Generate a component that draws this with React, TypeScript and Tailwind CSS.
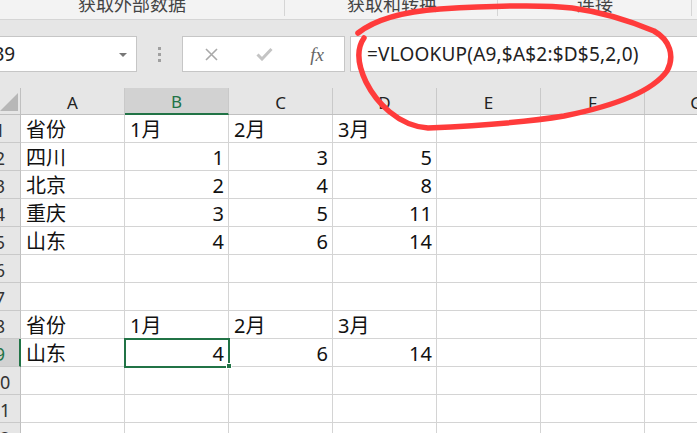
import React from "react"

const cols = ["A", "B", "C", "D", "E", "F", "G"]

type Cell = { t: string; right?: boolean }

const rows: Cell[][] = [
  [{ t: "省份" }, { t: "1月" }, { t: "2月" }, { t: "3月" }],
  [{ t: "四川" }, { t: "1", right: true }, { t: "3", right: true }, { t: "5", right: true }],
  [{ t: "北京" }, { t: "2", right: true }, { t: "4", right: true }, { t: "8", right: true }],
  [{ t: "重庆" }, { t: "3", right: true }, { t: "5", right: true }, { t: "11", right: true }],
  [{ t: "山东" }, { t: "4", right: true }, { t: "6", right: true }, { t: "14", right: true }],
  [],
  [],
  [{ t: "省份" }, { t: "1月" }, { t: "2月" }, { t: "3月" }],
  [{ t: "山东" }, { t: "4", right: true }, { t: "6", right: true }, { t: "14", right: true }],
  [],
  [],
  [],
]

const font = "font-['Noto_Sans','Noto_Sans_CJK_SC',sans-serif]"

const RibbonGroup: React.FC<{ label: string; w: string; pl: string }> = ({ label, w, pl }) => (
  <div className={`${w} ${pl} h-[16px] shrink-0 border-r border-[#d5d5d5] relative`}>
    <span className="absolute top-[-5px] text-[18px] leading-none text-[#444] whitespace-nowrap">{label}</span>
  </div>
)

const FormulaBar = () => (
  <div className="mt-[16px] flex h-[36px]">
    <div className="w-[138px] -ml-px shrink-0 bg-white border border-[#c6c6c6] flex items-center relative overflow-hidden">
      <span className="-ml-[8px] text-[19px] text-[#222] leading-none">B9</span>
      <span className="absolute left-[119px] top-[16px] w-0 h-0 border-l-[4px] border-r-[4px] border-t-[4px] border-l-transparent border-r-transparent border-t-[#777]" />
    </div>
    <div className="w-[45px] shrink-0 flex flex-col items-center justify-center gap-[3px]">
      <span className="w-[3px] h-[3px] bg-[#a0a0a0]" />
      <span className="w-[3px] h-[3px] bg-[#a0a0a0]" />
      <span className="w-[3px] h-[3px] bg-[#a0a0a0]" />
    </div>
    <div className="w-[163px] shrink-0 bg-white border border-[#c6c6c6] flex items-center">
      <div className="w-[56px] flex justify-center pl-[2px]">
        <svg width="15" height="15" viewBox="0 0 15 15">
          <path d="M2 2 L13 13 M13 2 L2 13" stroke="#a9a9a9" strokeWidth="1.6" fill="none" />
        </svg>
      </div>
      <div className="w-[52px] flex justify-center">
        <svg width="17" height="14" viewBox="0 0 17 14">
          <path d="M1.5 7.5 L6 12 L15.5 2" stroke="#c4c4c4" strokeWidth="3" fill="none" />
        </svg>
      </div>
      <div className="w-[54px] flex justify-center">
        <span className="font-['Liberation_Serif',serif] italic text-[19px] text-[#666] leading-none">fx</span>
      </div>
    </div>
    <div className="w-[5px] shrink-0" />
    <div className="flex-1 bg-white border border-r-0 border-[#c6c6c6] flex items-center pl-[16px]">
      <span className="text-[19px] tracking-[0.2px] text-[#222] leading-none whitespace-nowrap">=VLOOKUP(A9,$A$2:$D$5,2,0)</span>
    </div>
  </div>
)

const Grid = () => (
  <div className="mt-[16px] relative">
    <div className="flex h-[27px] border-b border-[#c0c0c0]">
      <div className="w-[21px] shrink-0 border-r border-[#c0c0c0] relative">
        <svg className="absolute left-0 top-[4px]" width="19" height="19" viewBox="0 0 19 19">
          <path d="M0 19 L18 19 L18 1 Z" fill="#b7b7b7" />
        </svg>
      </div>
      {cols.map((c) => {
        const sel = c === "B"
        return (
          <div
            key={c}
            className={`w-[104px] shrink-0 border-r border-[#c9c9c9] flex justify-center items-end pb-[3px] text-[17px] leading-none ${
              sel ? "bg-[#d2d2d2] text-[#217346] border-b-2 border-b-[#217346] -mb-px" : "text-[#222]"
            }`}
          >
            {c}
          </div>
        )
      })}
    </div>
    {rows.map((r, i) => {
      const n = i + 1
      const sel = n === 9
      return (
        <div key={n} className="flex h-[28px]">
          <div
            className={`w-[21px] shrink-0 overflow-hidden border-b border-[#c9c9c9] flex items-end pb-[3px] ${
              sel ? "bg-[#d2d2d2] text-[#217346] border-r-2 border-r-[#217346]" : "bg-[#e6e6e6] text-[#333] border-r border-r-[#c0c0c0]"
            }`}
          >
            <span className="w-[42px] shrink-0 -ml-[21px] text-center text-[18px] leading-none">{n}</span>
          </div>
          {cols.map((c, j) => {
            const cell = r[j]
            return (
              <div
                key={c}
                className={`w-[104px] shrink-0 bg-white border-r border-b border-[#d4d4d4] flex items-end pb-[2px] text-[20px] leading-none text-[#111] ${
                  cell?.right ? "justify-end pr-[4px]" : "pl-[5px]"
                }`}
              >
                {cell?.t}
              </div>
            )
          })}
        </div>
      )
    })}
    <div className="absolute left-[124px] top-[250px] w-[106px] h-[30px] border-2 border-[#217346]" />
    <div className="absolute left-[226px] top-[275px] w-[6px] h-[6px] bg-[#217346] border border-white" />
  </div>
)

export default function App() {
  return (
    <div className={`w-[697px] h-[433px] overflow-hidden relative bg-[#e6e6e6] ${font}`}>
      <div className="h-[20px] bg-[#f3f3f3] border-b border-[#d5d5d5] flex overflow-hidden">
        <RibbonGroup label="获取外部数据" w="w-[285px]" pl="pl-[78px]" />
        <RibbonGroup label="获取和转换" w="w-[213px]" pl="pl-[62px]" />
        <RibbonGroup label="连接" w="w-[194px]" pl="pl-[79px]" />
      </div>
      <FormulaBar />
      <Grid />
      <svg className="absolute left-0 top-0 pointer-events-none" width="697" height="433" viewBox="0 0 697 433">
        <path
          d="M358 33 C372 22 398 12 440 9 C490 6 540 4 572 8 C602 12 630 21 654 31 C670 40 675 56 667 71 C652 92 614 106 564 116 C522 123 472 126 428 128 C398 126 376 102 366 82 C357 63 357 48 364 38"
          stroke="#ff3b3b"
          strokeWidth="5.5"
          fill="none"
          strokeLinecap="round"
          strokeLinejoin="round"
        />
      </svg>
    </div>
  )
}
